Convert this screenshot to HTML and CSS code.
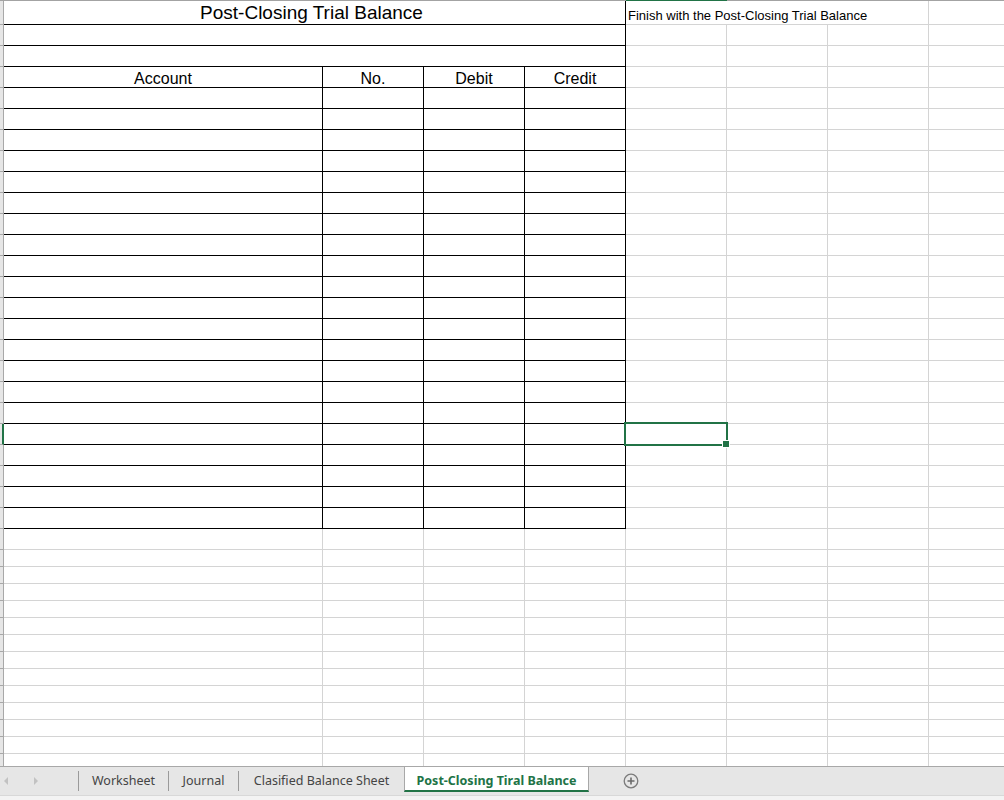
FILE: index.html
```html
<!DOCTYPE html>
<html>
<head>
<meta charset="utf-8">
<link rel="stylesheet" href="styles.css">
</head>
<body>
<div class="app">
  <div class="sheet">
    <div class="colbar"><div class="on"></div></div>
    <div class="row tall"><div class="s"></div><div class="c k span4 title">Post-Closing Trial Balance</div><div class="c span3 note">Finish with the Post-Closing Trial Balance</div><div class="c"></div></div>
    <div class="row"><div class="s"></div><div class="c k span4"></div><div class="c"></div><div class="c"></div><div class="c"></div><div class="c"></div></div>
    <div class="row"><div class="s"></div><div class="c k span4"></div><div class="c"></div><div class="c"></div><div class="c"></div><div class="c"></div></div>
    <div class="row"><div class="s"></div><div class="c k hd">Account</div><div class="c k hd">No.</div><div class="c k hd">Debit</div><div class="c k hd">Credit</div><div class="c"></div><div class="c"></div><div class="c"></div><div class="c"></div></div>
    <div class="row"><div class="s"></div><div class="c k"></div><div class="c k"></div><div class="c k"></div><div class="c k"></div><div class="c"></div><div class="c"></div><div class="c"></div><div class="c"></div></div>
    <div class="row"><div class="s"></div><div class="c k"></div><div class="c k"></div><div class="c k"></div><div class="c k"></div><div class="c"></div><div class="c"></div><div class="c"></div><div class="c"></div></div>
    <div class="row"><div class="s"></div><div class="c k"></div><div class="c k"></div><div class="c k"></div><div class="c k"></div><div class="c"></div><div class="c"></div><div class="c"></div><div class="c"></div></div>
    <div class="row"><div class="s"></div><div class="c k"></div><div class="c k"></div><div class="c k"></div><div class="c k"></div><div class="c"></div><div class="c"></div><div class="c"></div><div class="c"></div></div>
    <div class="row"><div class="s"></div><div class="c k"></div><div class="c k"></div><div class="c k"></div><div class="c k"></div><div class="c"></div><div class="c"></div><div class="c"></div><div class="c"></div></div>
    <div class="row"><div class="s"></div><div class="c k"></div><div class="c k"></div><div class="c k"></div><div class="c k"></div><div class="c"></div><div class="c"></div><div class="c"></div><div class="c"></div></div>
    <div class="row"><div class="s"></div><div class="c k"></div><div class="c k"></div><div class="c k"></div><div class="c k"></div><div class="c"></div><div class="c"></div><div class="c"></div><div class="c"></div></div>
    <div class="row"><div class="s"></div><div class="c k"></div><div class="c k"></div><div class="c k"></div><div class="c k"></div><div class="c"></div><div class="c"></div><div class="c"></div><div class="c"></div></div>
    <div class="row"><div class="s"></div><div class="c k"></div><div class="c k"></div><div class="c k"></div><div class="c k"></div><div class="c"></div><div class="c"></div><div class="c"></div><div class="c"></div></div>
    <div class="row"><div class="s"></div><div class="c k"></div><div class="c k"></div><div class="c k"></div><div class="c k"></div><div class="c"></div><div class="c"></div><div class="c"></div><div class="c"></div></div>
    <div class="row"><div class="s"></div><div class="c k"></div><div class="c k"></div><div class="c k"></div><div class="c k"></div><div class="c"></div><div class="c"></div><div class="c"></div><div class="c"></div></div>
    <div class="row"><div class="s"></div><div class="c k"></div><div class="c k"></div><div class="c k"></div><div class="c k"></div><div class="c"></div><div class="c"></div><div class="c"></div><div class="c"></div></div>
    <div class="row"><div class="s"></div><div class="c k"></div><div class="c k"></div><div class="c k"></div><div class="c k"></div><div class="c"></div><div class="c"></div><div class="c"></div><div class="c"></div></div>
    <div class="row"><div class="s"></div><div class="c k"></div><div class="c k"></div><div class="c k"></div><div class="c k"></div><div class="c"></div><div class="c"></div><div class="c"></div><div class="c"></div></div>
    <div class="row"><div class="s"></div><div class="c k"></div><div class="c k"></div><div class="c k"></div><div class="c k"></div><div class="c"></div><div class="c"></div><div class="c"></div><div class="c"></div></div>
    <div class="row"><div class="s"></div><div class="c k"></div><div class="c k"></div><div class="c k"></div><div class="c k"></div><div class="c"></div><div class="c"></div><div class="c"></div><div class="c"></div></div>
    <div class="row"><div class="s selrow"></div><div class="c k"></div><div class="c k"></div><div class="c k"></div><div class="c k"></div><div class="c cur"><div class="sel"></div><div class="handle"></div></div><div class="c"></div><div class="c"></div><div class="c"></div></div>
    <div class="row"><div class="s"></div><div class="c k"></div><div class="c k"></div><div class="c k"></div><div class="c k"></div><div class="c"></div><div class="c"></div><div class="c"></div><div class="c"></div></div>
    <div class="row"><div class="s"></div><div class="c k"></div><div class="c k"></div><div class="c k"></div><div class="c k"></div><div class="c"></div><div class="c"></div><div class="c"></div><div class="c"></div></div>
    <div class="row"><div class="s"></div><div class="c k"></div><div class="c k"></div><div class="c k"></div><div class="c k"></div><div class="c"></div><div class="c"></div><div class="c"></div><div class="c"></div></div>
    <div class="row"><div class="s"></div><div class="c k"></div><div class="c k"></div><div class="c k"></div><div class="c k"></div><div class="c"></div><div class="c"></div><div class="c"></div><div class="c"></div></div>
    <div class="row"><div class="s"></div><div class="c"></div><div class="c"></div><div class="c"></div><div class="c"></div><div class="c"></div><div class="c"></div><div class="c"></div><div class="c"></div></div>
    <div class="row low"><div class="s"></div><div class="c"></div><div class="c"></div><div class="c"></div><div class="c"></div><div class="c"></div><div class="c"></div><div class="c"></div><div class="c"></div></div>
    <div class="row low"><div class="s"></div><div class="c"></div><div class="c"></div><div class="c"></div><div class="c"></div><div class="c"></div><div class="c"></div><div class="c"></div><div class="c"></div></div>
    <div class="row low"><div class="s"></div><div class="c"></div><div class="c"></div><div class="c"></div><div class="c"></div><div class="c"></div><div class="c"></div><div class="c"></div><div class="c"></div></div>
    <div class="row low"><div class="s"></div><div class="c"></div><div class="c"></div><div class="c"></div><div class="c"></div><div class="c"></div><div class="c"></div><div class="c"></div><div class="c"></div></div>
    <div class="row low"><div class="s"></div><div class="c"></div><div class="c"></div><div class="c"></div><div class="c"></div><div class="c"></div><div class="c"></div><div class="c"></div><div class="c"></div></div>
    <div class="row low"><div class="s"></div><div class="c"></div><div class="c"></div><div class="c"></div><div class="c"></div><div class="c"></div><div class="c"></div><div class="c"></div><div class="c"></div></div>
    <div class="row low"><div class="s"></div><div class="c"></div><div class="c"></div><div class="c"></div><div class="c"></div><div class="c"></div><div class="c"></div><div class="c"></div><div class="c"></div></div>
    <div class="row low"><div class="s"></div><div class="c"></div><div class="c"></div><div class="c"></div><div class="c"></div><div class="c"></div><div class="c"></div><div class="c"></div><div class="c"></div></div>
    <div class="row low"><div class="s"></div><div class="c"></div><div class="c"></div><div class="c"></div><div class="c"></div><div class="c"></div><div class="c"></div><div class="c"></div><div class="c"></div></div>
    <div class="row low"><div class="s"></div><div class="c"></div><div class="c"></div><div class="c"></div><div class="c"></div><div class="c"></div><div class="c"></div><div class="c"></div><div class="c"></div></div>
    <div class="row low"><div class="s"></div><div class="c"></div><div class="c"></div><div class="c"></div><div class="c"></div><div class="c"></div><div class="c"></div><div class="c"></div><div class="c"></div></div>
    <div class="row low"><div class="s"></div><div class="c"></div><div class="c"></div><div class="c"></div><div class="c"></div><div class="c"></div><div class="c"></div><div class="c"></div><div class="c"></div></div>
    <div class="row low"><div class="s"></div><div class="c"></div><div class="c"></div><div class="c"></div><div class="c"></div><div class="c"></div><div class="c"></div><div class="c"></div><div class="c"></div></div>
  </div>
  <div class="tabbar">
    <div class="tabs">
      <div class="nav">
        <svg class="arrow" width="5" height="8" viewBox="0 0 5 8"><path d="M4 0 L0 4 L4 8 Z" fill="#c2c2c2"/></svg>
        <svg class="arrow" width="5" height="8" viewBox="0 0 5 8"><path d="M0 0 L4 4 L0 8 Z" fill="#c2c2c2"/></svg>
      </div>
      <div class="sep"></div>
      <div class="tab w1">Worksheet</div>
      <div class="sep"></div>
      <div class="tab w2">Journal</div>
      <div class="sep"></div>
      <div class="tab w3">Clasified Balance Sheet</div>
      <div class="tab active">Post-Closing Tiral Balance</div>
      <div class="add">
        <svg width="16" height="16" viewBox="0 0 16 16"><circle cx="8" cy="8" r="6.8" fill="none" stroke="#7b7b7b" stroke-width="1.3"/><path d="M8 4.5 V11.5 M4.5 8 H11.5" stroke="#6b6b6b" stroke-width="1.6"/></svg>
      </div>
    </div>
    <div class="foot"></div>
  </div>
</div>
</body>
</html>
```

FILE: styles.css
```css
html, body {
  margin: 0;
  padding: 0;
  background: #ffffff;
}
body {
  font-family: "Liberation Sans", Arial, sans-serif;
  color: #000;
}
.app {
  width: 1004px;
  height: 800px;
  overflow: hidden;
  display: flex;
  flex-direction: column;
}
.sheet {
  flex: none;
  height: 766px;
  overflow: hidden;
}
.colbar {
  display: grid;
  grid-template-columns: 4px 319px repeat(7, 101px);
  height: 1px;
  background: #a3a3a3;
}
.colbar .on {
  grid-column: 6;
  background: #217346;
}
.row {
  display: grid;
  grid-template-columns: 4px 319px repeat(7, 101px);
  height: 21px;
}
.row.tall { height: 24px; }
.row.low { height: 17px; }
.s {
  box-sizing: border-box;
  background: #e6e6e6;
  border-right: 1px solid #a8a8a8;
  border-bottom: 1px solid #a8a8a8;
}
.s.selrow {
  border-right: 2px solid #217346;
}
.c {
  box-sizing: border-box;
  border-right: 1px solid #d4d4d4;
  border-bottom: 1px solid #d4d4d4;
  min-width: 0;
}
.c.k {
  border-color: #000;
}
.span4 { grid-column: span 4; }
.span3 { grid-column: span 3; }
.title {
  display: flex;
  align-items: flex-end;
  justify-content: center;
  font-size: 19px;
  line-height: 1.15;
  padding-right: 6px;
  white-space: nowrap;
}
.hd {
  display: flex;
  align-items: flex-end;
  justify-content: center;
  font-size: 16px;
  line-height: 1;
  white-space: nowrap;
}
.note {
  display: flex;
  align-items: flex-end;
  font-size: 13px;
  padding: 0 0 1px 2px;
  white-space: nowrap;
}
.cur {
  position: relative;
}
.sel {
  position: absolute;
  left: -2px;
  top: -2px;
  width: 104px;
  height: 24px;
  box-sizing: border-box;
  border: 2px solid #217346;
}
.handle {
  position: absolute;
  left: 96px;
  top: 16px;
  width: 8px;
  height: 8px;
  box-sizing: border-box;
  background: #217346;
  border: 1px solid #ffffff;
}
.tabbar {
  flex: none;
  height: 34px;
  box-sizing: border-box;
  border-top: 1px solid #a8a8a8;
  background: #e6e6e6;
  display: flex;
  flex-direction: column;
}
.tabs {
  height: 28px;
  display: flex;
  align-items: flex-start;
  font-family: "Noto Sans", "Open Sans", sans-serif;
  font-size: 12.5px;
  color: #444444;
}
.nav {
  width: 78px;
  height: 27px;
  display: flex;
  align-items: center;
  padding-left: 4px;
  gap: 25px;
  box-sizing: border-box;
}
.arrow { display: block; }
.sep {
  width: 1px;
  height: 20px;
  margin-top: 4px;
  background: #9a9a9a;
  flex: none;
}
.tab {
  height: 26px;
  display: flex;
  align-items: center;
  justify-content: center;
  white-space: nowrap;
  flex: none;
  box-sizing: border-box;
}
.w1 { width: 89px; }
.w2 { width: 69px; }
.w3 { width: 165px; }
.tab.active {
  width: 185px;
  height: 25px;
  padding-top: 3px;
  background: #ffffff;
  border-left: 1px solid #a8a8a8;
  border-right: 1px solid #a8a8a8;
  border-bottom: 2px solid #217346;
  color: #217346;
  font-weight: bold;
}
.add {
  margin-left: 34px;
  height: 27px;
  display: flex;
  align-items: center;
}
.add svg { display: block; }
.foot {
  height: 5px;
  box-sizing: border-box;
  border-top: 1px solid #d8d8d8;
  background: #f3f3f3;
}
```
